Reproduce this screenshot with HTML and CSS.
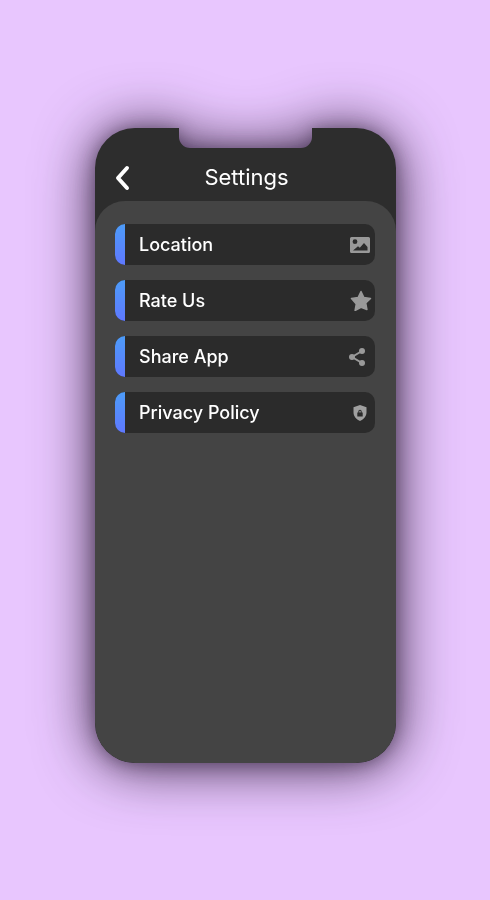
FILE: index.html
```html
<!DOCTYPE html>
<html lang="en">
<head>
  <meta charset="UTF-8" />
  <title>Settings</title>
  <link rel="stylesheet" href="styles.css">
</head>
<body>

  <div class="phone">
    <div class="body">
      <header class="top">
        <svg class="back" width="16" height="26" viewBox="0 0 16 26"><path d="M13 3 L4 13 L13 23" fill="none" stroke="#fff" stroke-width="4" stroke-linecap="round" stroke-linejoin="round"/></svg>
        <h1>Settings</h1>
      </header>

      <div class="sheet">
        <a class="row" href="#">
          <span class="bar"></span>
          <span class="label">Location</span>
          <svg class="icon icon-image" width="20" height="16" viewBox="0 0 20 16"><path fill="#999" fill-rule="evenodd" d="M1.500 0h17A1.500 1.500 0 0 1 20 1.500v13a1.500 1.500 0 0 1-1.500 1.500h-17A1.500 1.500 0 0 1 0 14.500v-13A1.500 1.500 0 0 1 1.500 0zM5 2.300a2.400 2.400 0 1 0 0 4.800 2.400 2.400 0 0 0 0-4.800zM3 13.500h14.500V10l-3.500-4-4.200 4.700-1.800-1.500z"/></svg>
        </a>
        <a class="row" href="#">
          <span class="bar"></span>
          <span class="label">Rate Us</span>
          <svg class="icon icon-star" width="22" height="21" viewBox="0 0 22 21"><path fill="#999" stroke="#999" stroke-width="1.500" stroke-linejoin="round" d="M11 1.500l2.900 6 6.600.9-4.800 4.600 1.200 6.500L11 17.300l-5.900 3.200 1.200-6.500L1.500 8.400l6.600-.9z"/></svg>
        </a>
        <a class="row" href="#">
          <span class="bar"></span>
          <span class="label">Share App</span>
          <svg class="icon icon-share" width="16" height="18" viewBox="0 0 16 18"><g fill="#999"><circle cx="3" cy="9" r="3"/><circle cx="13" cy="3" r="3"/><circle cx="13" cy="15" r="3"/></g><path d="M13 3 L3 9 L13 15" fill="none" stroke="#999" stroke-width="2"/></svg>
        </a>
        <a class="row" href="#">
          <span class="bar"></span>
          <span class="label">Privacy Policy</span>
          <svg class="icon icon-lock" width="14" height="16" viewBox="0 0 14 16"><path fill="#a0a0a0" fill-rule="evenodd" d="M7 0l6.500 2.300v5c0 4-2.700 7.200-6.500 8.700C3.200 14.500.5 11.300.5 7.300v-5zM5.300 6.400v1H4.300v4.200h5.400V7.400h-1v-1a1.700 1.700 0 0 0-3.400 0zm1 1v-1a.7.7 0 0 1 1.400 0v1z"/></svg>
        </a>
      </div>
    </div>
  </div>

</body>
</html>
```

FILE: styles.css
```css
* {
  box-sizing: border-box;
}
body {
  font-family: 'Inter', 'Liberation Sans', sans-serif;
  background: #e8c6fe;
  margin: 0;
  height: 900px;
  overflow: hidden;
  padding: 128px 94px 0 95px;
}
.phone {
  width: 301px;
  height: 635px;
  filter: drop-shadow(0 1px 9px rgba(30,15,40,0.4)) drop-shadow(0 2px 28px rgba(30,15,40,0.85));
}
.body {
  height: 100%;
  background: #2d2d2d;
  clip-path: path('M40 0H84V9a11 11 0 0 0 11 11H206a11 11 0 0 0 11-11V0H261a40 40 0 0 1 40 40V595a40 40 0 0 1-40 40H40a40 40 0 0 1-40-40V40a40 40 0 0 1 40-40Z');
  display: flex;
  flex-direction: column;
}
.top {
  height: 73px;
  flex-shrink: 0;
  padding-top: 24px;
  display: flex;
  align-items: center;
  justify-content: center;
  position: relative;
}
.top h1 {
  color: white;
  font-size: 22px;
  font-weight: 400;
  margin: 0 0 0 2px;
}
.back {
  position: absolute;
  left: 19px;
  top: 37px;
}
.sheet {
  flex: 1;
  background: #444444;
  border-radius: 30px 30px 40px 40px;
  padding: 23px 21px 0 20px;
  display: flex;
  flex-direction: column;
  gap: 15px;
}
.row {
  height: 41px;
  background: #2b2b2b;
  border-radius: 10px;
  overflow: hidden;
  display: flex;
  align-items: center;
  color: white;
  text-decoration: none;
}
.bar {
  width: 10px;
  height: 100%;
  background: linear-gradient(#4d9cf8, #5f78ff);
}
.label {
  font-size: 18px;
  font-weight: 500;
  margin: 0 0 0 14px;
  flex: 1;
}
.icon-image {
  margin-right: 5px;
}
.icon-star {
  margin-right: 3px;
}
.icon-share {
  margin-right: 10px;
}
.icon-lock {
  margin-right: 8px;
}
```
